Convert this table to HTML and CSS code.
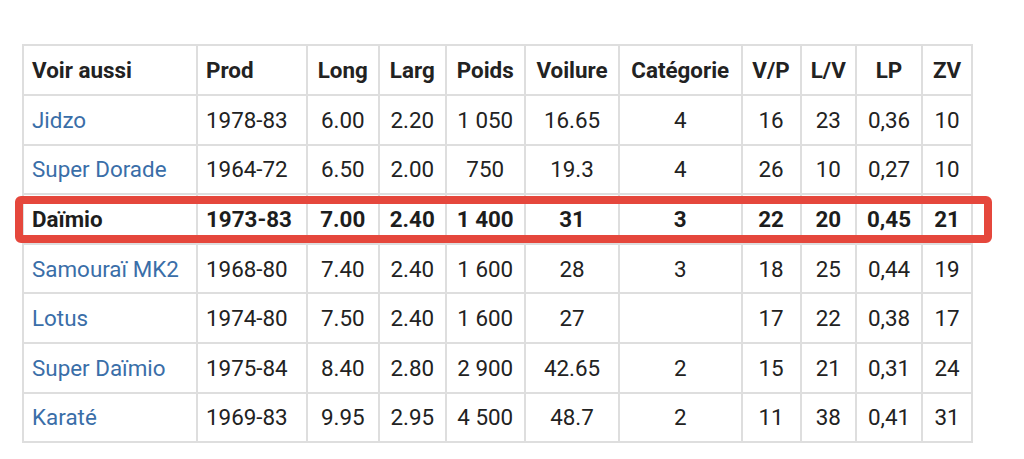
FILE: index.html
```html
<!DOCTYPE html>
<html lang="fr">
<head>
<meta charset="utf-8">
<title>Voir aussi</title>
<link rel="stylesheet" href="styles.css">
</head>
<body>
<div class="wrap">
  <table class="wikitable">
    <colgroup>
      <col class="c1"><col class="c2"><col class="c3"><col class="c4"><col class="c5"><col class="c6"><col class="c7"><col class="c8"><col class="c9"><col class="c10"><col class="c11">
    </colgroup>
    <thead>
      <tr class="head">
        <th class="l">Voir aussi</th><th class="l">Prod</th><th>Long</th><th>Larg</th><th>Poids</th><th>Voilure</th><th>Catégorie</th><th>V/P</th><th>L/V</th><th>LP</th><th>ZV</th>
      </tr>
    </thead>
    <tbody>
      <tr><td class="l"><a href="#">Jidzo</a></td><td class="l">1978-83</td><td>6.00</td><td>2.20</td><td>1&nbsp;050</td><td>16.65</td><td>4</td><td>16</td><td>23</td><td>0,36</td><td>10</td></tr>
      <tr><td class="l"><a href="#">Super Dorade</a></td><td class="l">1964-72</td><td>6.50</td><td>2.00</td><td>750</td><td>19.3</td><td>4</td><td>26</td><td>10</td><td>0,27</td><td>10</td></tr>
      <tr class="hl"><td class="l">Daïmio</td><td class="l">1973-83</td><td>7.00</td><td>2.40</td><td>1&nbsp;400</td><td>31</td><td>3</td><td>22</td><td>20</td><td>0,45</td><td>21</td></tr>
      <tr><td class="l"><a href="#">Samouraï MK2</a></td><td class="l">1968-80</td><td>7.40</td><td>2.40</td><td>1&nbsp;600</td><td>28</td><td>3</td><td>18</td><td>25</td><td>0,44</td><td>19</td></tr>
      <tr><td class="l"><a href="#">Lotus</a></td><td class="l">1974-80</td><td>7.50</td><td>2.40</td><td>1&nbsp;600</td><td>27</td><td></td><td>17</td><td>22</td><td>0,38</td><td>17</td></tr>
      <tr><td class="l"><a href="#">Super Daïmio</a></td><td class="l">1975-84</td><td>8.40</td><td>2.80</td><td>2&nbsp;900</td><td>42.65</td><td>2</td><td>15</td><td>21</td><td>0,31</td><td>24</td></tr>
      <tr><td class="l"><a href="#">Karaté</a></td><td class="l">1969-83</td><td>9.95</td><td>2.95</td><td>4&nbsp;500</td><td>48.7</td><td>2</td><td>11</td><td>38</td><td>0,41</td><td>31</td></tr>
    </tbody>
  </table>
  <div class="mark"></div>
</div>
</body>
</html>
```
FILE: styles.css
```css
html, body {
  margin: 0;
  padding: 0;
  background: #ffffff;
}

body {
  font-family: Roboto, "Noto Sans", "Liberation Sans", sans-serif;
  color: #222222;
  font-size: 22.4px;
}

.wrap {
  position: relative;
  padding: 44px 0 0 22px;
}

.wikitable {
  border-collapse: collapse;
  table-layout: fixed;
  width: 951px;
  border: 2px solid #dedede;
}

.wikitable th,
.wikitable td {
  border: 2px solid #dedede;
  padding: 0 8px;
  text-align: center;
  vertical-align: middle;
  line-height: 26px;
  white-space: nowrap;
}

.wikitable th {
  font-weight: 700;
  color: #222222;
}

.wikitable .l {
  text-align: left;
}

.head {
  height: 50px;
}

tbody tr {
  height: 49.6px;
}

.wikitable a {
  color: #3a6ea8;
  text-decoration: none;
}

.hl td {
  font-weight: 700;
  color: #1d1d1d;
}

.c1 { width: 174px; }
.c2 { width: 109.5px; }
.c3 { width: 72.5px; }
.c4 { width: 66.5px; }
.c5 { width: 79.5px; }
.c6 { width: 94px; }
.c7 { width: 122.5px; }
.c8 { width: 59px; }
.c9 { width: 55.5px; }
.c10 { width: 66px; }
.c11 { width: 50px; }

.mark {
  position: absolute;
  left: 15px;
  top: 196px;
  width: 977px;
  height: 47px;
  box-sizing: border-box;
  border: 8px solid #e5473c;
  border-radius: 6px;
  pointer-events: none;
}
```
